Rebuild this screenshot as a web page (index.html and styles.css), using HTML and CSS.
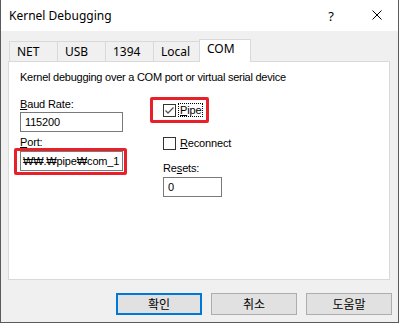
FILE: index.html
```html
<!DOCTYPE html>
<html lang="ko">
<head>
    <meta charset="UTF-8">
    <title>Kernel Debugging</title>
    <link rel="stylesheet" href="styles.css">
</head>
<body>
    <div class="window">
        <div class="titlebar">
            <span class="title">Kernel Debugging</span>
            <span class="help">?</span>
            <span class="close">
                <svg width="10" height="10" viewBox="0 0 10 10">
                    <path d="M0.5 0.5 L9.5 9.5 M9.5 0.5 L0.5 9.5" stroke="#000" stroke-width="1"/>
                </svg>
            </span>
        </div>

        <div class="client">
            <div class="tabs">
                <div class="tab">NET</div>
                <div class="tab">USB</div>
                <div class="tab">1394</div>
                <div class="tab">Local</div>
                <div class="tab selected">COM</div>
            </div>

            <div class="panel">
                <div class="desc">Kernel debugging over a COM port or virtual serial device</div>

                <div class="fields">
                    <div class="col-left">
                        <div class="label"><u>B</u>aud Rate:</div>
                        <div class="input">115200</div>
                        <div class="label port-label"><u>P</u>ort:</div>
                        <div class="input port-input marked">₩₩.₩pipe₩com_1</div>
                    </div>

                    <div class="col-right">
                        <div class="check pipe marked">
                            <span class="box">
                                <svg width="11" height="11" viewBox="0 0 11 11">
                                    <path d="M1.5 5.5 L4 8 L9.5 2.5" fill="none" stroke="#555" stroke-width="1.3"/>
                                </svg>
                            </span>
                            <span class="focus"><u>P</u>ipe</span>
                        </div>
                        <div class="check reconnect">
                            <span class="box"></span>
                            <span><u>R</u>econnect</span>
                        </div>
                        <div class="label resets-label">Re<u>s</u>ets:</div>
                        <div class="input resets-input">0</div>
                    </div>
                </div>
            </div>

            <div class="buttons">
                <button class="default">확인</button>
                <button>취소</button>
                <button>도움말</button>
            </div>
        </div>
    </div>
</body>
</html>
```

FILE: styles.css
```css
body {
    margin: 0;
    font-family: "Liberation Sans", Arial, sans-serif;
    font-size: 11px;
    color: #000;
}
.window {
    width: 399px;
    height: 323px;
    box-sizing: border-box;
    border: 1px solid #5b5b5b;
    border-top: none;
    display: flex;
    flex-direction: column;
    background: #f0f0f0;
}
.titlebar {
    height: 31px;
    background: #fff;
    display: flex;
    align-items: center;
    padding-left: 8px;
    font-family: "Noto Sans", sans-serif;
    font-size: 12px;
}
.title {
    flex: 1;
    padding-bottom: 1px;
}
.help {
    width: 50px;
    text-align: center;
    font-size: 13px;
}
.close {
    width: 42px;
    display: flex;
    justify-content: center;
    padding-bottom: 1px;
}
.client {
    flex: 1;
    padding: 8px 8px 0 7px;
}
.tabs {
    display: flex;
    height: 22px;
    padding-left: 1px;
    align-items: flex-end;
    font-family: "Noto Sans", sans-serif;
    font-size: 12px;
}
.tab {
    width: 48px;
    height: 20px;
    box-sizing: border-box;
    border: 1px solid #d9d9d9;
    border-bottom: none;
    border-right: none;
    padding: 1px 0 0 7px;
    line-height: 17px;
    background: #f0f0f0;
}
.tab.selected {
    position: relative;
    z-index: 1;
    width: 52px;
    height: 23px;
    margin-left: -2px;
    margin-bottom: -1px;
    border-right: 1px solid #d9d9d9;
    background: #fff;
    padding-top: 0;
    line-height: 18px;
}
.panel {
    height: 219px;
    box-sizing: border-box;
    border: 1px solid #d9d9d9;
    background: #fff;
    padding: 9px 11px 0 11px;
    letter-spacing: -0.15px;
}
.desc {
    line-height: 13px;
    letter-spacing: -0.25px;
}
.fields {
    display: flex;
    margin-top: 13px;
}
.col-left {
    width: 103px;
}
.col-right {
    margin-left: 40px;
}
.label {
    line-height: 14px;
}
.input {
    height: 20px;
    box-sizing: border-box;
    border: 1px solid #7a7a7a;
    padding-left: 4px;
    line-height: 18px;
    margin-top: 1px;
    white-space: nowrap;
    overflow: hidden;
}
.port-label {
    margin-top: 3px;
}
.port-input {
    margin-top: 2px;
    padding-left: 2px;
    overflow: visible;
}
.marked {
    position: relative;
}
.marked::after {
    content: "";
    position: absolute;
    border: 3px solid #e8202a;
    border-radius: 2px;
}
.port-input::after {
    left: -7px;
    right: -5px;
    top: -4px;
    bottom: -5px;
}
.check {
    display: flex;
    align-items: center;
    height: 14px;
}
.box {
    width: 13px;
    height: 13px;
    box-sizing: border-box;
    border: 1px solid #333;
    background: #fff;
    margin-right: 3px;
    display: flex;
    align-items: center;
    justify-content: center;
}
.pipe {
    height: 26px;
}
.pipe::after {
    left: -13px;
    top: 0;
    width: 53px;
    height: 20px;
}
.focus {
    outline: 1px dotted #000;
    padding: 0 1px;
    line-height: 12px;
}
.reconnect {
    margin-top: 13px;
}
.reconnect .box {
    margin-right: 4px;
}
.resets-label {
    margin-top: 11px;
}
.resets-input {
    width: 59px;
    margin-top: 2px;
}
.buttons {
    display: flex;
    justify-content: flex-end;
    gap: 9px;
    margin-top: 13px;
    margin-right: -2px;
}
button {
    width: 86px;
    height: 22px;
    background: #e1e1e1;
    border: 1px solid #adadad;
    font-family: "Noto Sans CJK KR", sans-serif;
    font-size: 12px;
    color: #000;
    padding: 0;
    line-height: 18px;
}
button.default {
    border: 2px solid #0078d7;
}
```
